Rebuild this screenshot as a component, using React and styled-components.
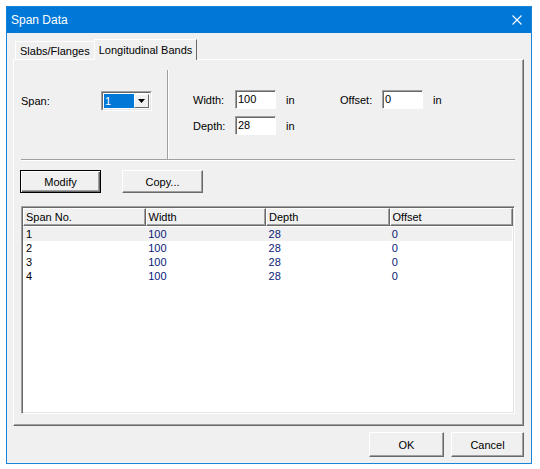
import React from 'react';
import styled, { createGlobalStyle } from 'styled-components';

const GlobalStyle = createGlobalStyle`
  html, body {
    margin: 0;
    padding: 0;
    background: #ffffff;
  }
  body {
    font-family: "Liberation Sans", Arial, sans-serif;
    font-size: 11px;
    color: #000;
  }
`;

const rows = [
  { span: 1, width: 100, depth: 28, offset: 0 },
  { span: 2, width: 100, depth: 28, offset: 0 },
  { span: 3, width: 100, depth: 28, offset: 0 },
  { span: 4, width: 100, depth: 28, offset: 0 },
];

const columns = [
  { key: 'span', title: 'Span No.', width: 123 },
  { key: 'width', title: 'Width', width: 121 },
  { key: 'depth', title: 'Depth', width: 124 },
  { key: 'offset', title: 'Offset', width: 124 },
];

const Window = styled.div`
  margin: 6px 0 0 6px;
  width: 524px;
  height: 456px;
  border: 1px solid #1883d7;
  background: #f0f0f0;
  display: flex;
  flex-direction: column;
`;

const TitleBar = styled.div`
  height: 26px;
  background: #0078d7;
  color: #fff;
  display: flex;
  align-items: center;
  justify-content: space-between;
  padding: 0 9px 0 4px;
  font-size: 12px;
  flex-shrink: 0;
`;

const Body = styled.div`
  flex: 1;
  display: flex;
  flex-direction: column;
  padding: 6px 7px 6px 6px;
`;

const TabStrip = styled.div`
  display: flex;
  align-items: flex-end;
  height: 20px;
  padding-left: 2px;
  position: relative;
  z-index: 1;
`;

const Tab = styled.div`
  box-sizing: border-box;
  height: ${(p) => (p.$active ? '21px' : '18px')};
  padding: 0 ${(p) => (p.$active ? '4px' : '4px')};
  margin-bottom: ${(p) => (p.$active ? '-1px' : '0')};
  margin-left: ${(p) => (p.$active ? '-1px' : '0')};
  display: flex;
  align-items: center;
  background: #f0f0f0;
  border-top: 1px solid #fff;
  border-left: 1px solid #fff;
  border-right: 1px solid ${(p) => (p.$active ? '#696969' : '#a0a0a0')};
  font-size: 11px;
  white-space: nowrap;
`;

const Panel = styled.div`
  flex: 1;
  display: flex;
  flex-direction: column;
  box-sizing: border-box;
  border-top: 1px solid #fff;
  border-left: 1px solid #fff;
  border-right: 1px solid #696969;
  border-bottom: 1px solid #696969;
  box-shadow: inset -1px -1px 0 #a0a0a0;
  padding: 0 8px 11px 7px;
`;

const Upper = styled.div`
  display: flex;
  height: 99px;
`;

const SpanSection = styled.div`
  width: 146px;
  display: flex;
  align-items: center;
  padding-bottom: 18px;
  box-sizing: border-box;
`;

const VDivider = styled.div`
  width: 1px;
  margin-top: 10px;
  background: #a0a0a0;
  border-right: 1px solid #fff;
`;

const Label = styled.span`
  width: ${(p) => p.$w}px;
  flex-shrink: 0;
`;

const Combo = styled.div`
  width: 51px;
  height: 20px;
  box-sizing: border-box;
  border: 1px solid #a0a0a0;
  border-right-color: #fff;
  border-bottom-color: #fff;
  display: flex;
  background: #fff;
`;

const ComboInner = styled.div`
  flex: 1;
  display: flex;
  border: 1px solid #696969;
  border-right-color: #e3e3e3;
  border-bottom-color: #e3e3e3;
  padding: 1px;
`;

const ComboValue = styled.div`
  flex: 1;
  background: #0078d7;
  color: #fff;
  display: flex;
  align-items: center;
  padding-left: 1px;
`;

const ComboButton = styled.div`
  width: 15px;
  box-sizing: border-box;
  background: #f0f0f0;
  border-top: 1px solid #fff;
  border-left: 1px solid #fff;
  border-right: 1px solid #696969;
  border-bottom: 1px solid #696969;
  display: flex;
  align-items: center;
  justify-content: center;
`;

const FieldsSection = styled.div`
  flex: 1;
  padding: 30px 0 0 24px;
  display: flex;
  flex-direction: column;
  gap: 7px;
`;

const FieldRow = styled.div`
  display: flex;
  align-items: center;
  height: 19px;
`;

const TextBox = styled.div`
  width: 41px;
  height: 19px;
  box-sizing: border-box;
  background: #fff;
  border: 1px solid #a0a0a0;
  border-right-color: #fff;
  border-bottom-color: #fff;
  box-shadow: inset 1px 1px 0 #696969;
  padding: 2px 0 0 2px;
  flex-shrink: 0;
`;

const Unit = styled.span`
  margin-left: 10px;
  width: ${(p) => p.$w || 20}px;
  flex-shrink: 0;
`;

const HDivider = styled.div`
  height: 1px;
  background: #a0a0a0;
  border-bottom: 1px solid #fff;
`;

const ButtonRow = styled.div`
  display: flex;
  gap: 21px;
  margin-top: 9px;
  margin-left: -1px;
`;

const Button = styled.div`
  width: ${(p) => p.$w || 81}px;
  height: ${(p) => p.$h || 23}px;
  box-sizing: border-box;
  display: flex;
  align-items: center;
  justify-content: center;
  background: #f0f0f0;
  border: 1px solid ${(p) => (p.$default ? '#000' : '#fff')};
  border-right-color: ${(p) => (p.$default ? '#000' : '#696969')};
  border-bottom-color: ${(p) => (p.$default ? '#000' : '#696969')};
  box-shadow: ${(p) =>
    p.$default
      ? 'inset 1px 1px 0 #fff, inset -1px -1px 0 #696969, inset -2px -2px 0 #a0a0a0'
      : 'inset -1px -1px 0 #a0a0a0'};
  font-size: 11px;
`;

const ListBox = styled.div`
  flex: 1;
  margin-top: 13px;
  box-sizing: border-box;
  background: #fff;
  border: 1px solid #a0a0a0;
  border-right-color: #fff;
  border-bottom-color: #fff;
  box-shadow: inset 1px 1px 0 #696969, inset -1px -1px 0 #e3e3e3;
  padding: 1px;
  display: flex;
  flex-direction: column;
`;

const HeaderRow = styled.div`
  display: flex;
  height: 18px;
  margin-bottom: 1px;
`;

const HeaderCell = styled.div`
  width: ${(p) => p.$w}px;
  box-sizing: border-box;
  background: #f0f0f0;
  border-top: 1px solid #fff;
  border-left: 1px solid #fff;
  border-right: 1px solid #696969;
  border-bottom: 1px solid #696969;
  box-shadow: inset -1px -1px 0 #a0a0a0;
  padding-left: 2px;
  display: flex;
  align-items: center;
`;

const DataRow = styled.div`
  display: flex;
  height: 14px;
  background: ${(p) => (p.$selected ? '#f0f0f0' : 'transparent')};
  margin-right: 1px;
`;

const DataCell = styled.div`
  width: ${(p) => p.$w}px;
  box-sizing: border-box;
  padding-left: 3px;
  display: flex;
  align-items: center;
  color: ${(p) => (p.$num ? '#0a1a78' : '#000')};
`;

const Footer = styled.div`
  display: flex;
  justify-content: flex-end;
  gap: 7px;
  padding-top: 6px;
`;

const CloseIcon = () => (
  <svg width="10" height="10" viewBox="0 0 10 10">
    <path d="M0.5 0.5 L9.5 9.5 M9.5 0.5 L0.5 9.5" stroke="#fff" strokeWidth="1.1" />
  </svg>
);

const ArrowIcon = () => (
  <svg width="7" height="4" viewBox="0 0 7 4">
    <path d="M0 0 H7 L3.5 4 Z" fill="#000" />
  </svg>
);

const App = () => (
  <>
    <GlobalStyle />
    <Window>
      <TitleBar>
        <span>Span Data</span>
        <CloseIcon />
      </TitleBar>
      <Body>
        <TabStrip>
          <Tab>Slabs/Flanges</Tab>
          <Tab $active>Longitudinal Bands</Tab>
        </TabStrip>
        <Panel>
          <Upper>
            <SpanSection>
              <Label $w={80}>Span:</Label>
              <Combo>
                <ComboInner>
                  <ComboValue>1</ComboValue>
                  <ComboButton>
                    <ArrowIcon />
                  </ComboButton>
                </ComboInner>
              </Combo>
            </SpanSection>
            <VDivider />
            <FieldsSection>
              <FieldRow>
                <Label $w={42}>Width:</Label>
                <TextBox>100</TextBox>
                <Unit $w={54}>in</Unit>
                <Label $w={42}>Offset:</Label>
                <TextBox>0</TextBox>
                <Unit>in</Unit>
              </FieldRow>
              <FieldRow>
                <Label $w={42}>Depth:</Label>
                <TextBox>28</TextBox>
                <Unit>in</Unit>
              </FieldRow>
            </FieldsSection>
          </Upper>
          <HDivider />
          <ButtonRow>
            <Button $default>Modify</Button>
            <Button>Copy...</Button>
          </ButtonRow>
          <ListBox>
            <HeaderRow>
              {columns.map((c) => (
                <HeaderCell key={c.key} $w={c.width}>
                  {c.title}
                </HeaderCell>
              ))}
            </HeaderRow>
            {rows.map((r, i) => (
              <DataRow key={r.span} $selected={i === 0}>
                {columns.map((c) => (
                  <DataCell key={c.key} $w={c.width} $num={c.key !== 'span'}>
                    {r[c.key]}
                  </DataCell>
                ))}
              </DataRow>
            ))}
          </ListBox>
        </Panel>
        <Footer>
          <Button $w={75} $h={25}>OK</Button>
          <Button $w={73} $h={25}>Cancel</Button>
        </Footer>
      </Body>
    </Window>
  </>
);

export default App;
